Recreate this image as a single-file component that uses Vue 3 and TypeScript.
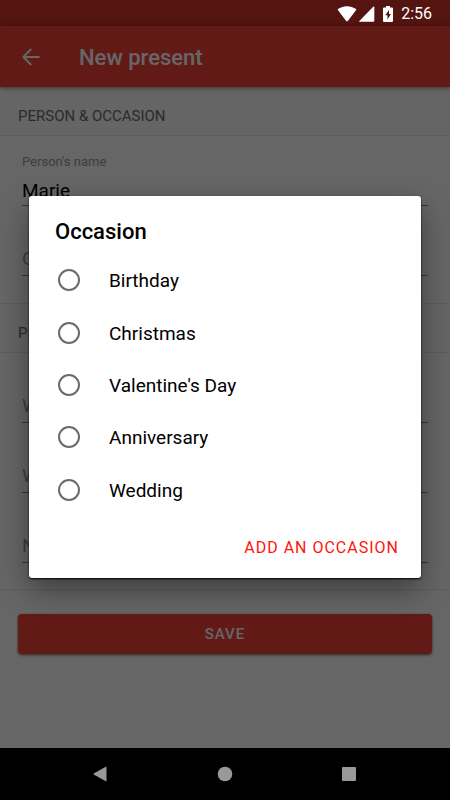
<script setup lang="ts">
import { ref } from 'vue'

interface Field {
  id: string
  label: string
}

const person = ref<string>('Marie')
const occasion = ref<string>('')
const occasions: string[] = ['Birthday', 'Christmas', "Valentine's Day", 'Anniversary', 'Wedding']
const details: Field[] = [
  { id: 'what', label: 'What' },
  { id: 'where', label: 'Where' },
  { id: 'notes', label: 'Notes' },
]
</script>

<template>
  <div class="screen">
    <div class="status">
      <svg class="wifi" width="20" height="16" viewBox="0 0 20 16" aria-hidden="true">
        <path d="M.5 3.600C3 1.500 6 .2 10 .2s7 1.300 9.500 3.400L11 14.800q-1 1.100-2 0z" />
      </svg>
      <svg class="signal" width="16" height="16" viewBox="0 0 16 16" aria-hidden="true">
        <path d="M15.300 1.200v13.600q0 1-1 1H.8q-1.200 0-.4-.9L14.200.8q1.100-.9 1.100.4z" />
      </svg>
      <svg class="battery" width="10" height="16" viewBox="0 0 10 16" aria-hidden="true">
        <path fill-rule="evenodd" d="M3 0h4v1.500h2q1 0 1 1V15q0 1-1 1H1q-1 0-1-1V2.500q0-1 1-1h2zM6 4 2.300 9.200h2.200V13.500L7.900 8H6z" />
      </svg>
      <span>2:56</span>
    </div>

    <div class="app">
      <header class="bar">
        <button class="back" type="button" aria-label="Back">
          <svg width="18" height="18" viewBox="0 0 18 18" aria-hidden="true">
            <path d="M17.500 9H1.500M9.200 1 1.300 9l7.900 8" />
          </svg>
        </button>
        <h1>New present</h1>
      </header>

      <main>
        <h2>PERSON &amp; OCCASION</h2>
        <div class="fields first">
          <div class="field filled">
            <label for="person">Person's name</label>
            <input id="person" v-model="person" type="text" />
          </div>
          <div class="field">
            <input id="occasion" type="text" placeholder="Occasion" aria-label="Occasion" readonly :value="occasion" />
          </div>
        </div>
        <h2 class="ruled">PRESENT</h2>
        <div class="fields second">
          <div v-for="f in details" :key="f.id" class="field">
            <input :id="f.id" type="text" :placeholder="f.label" :aria-label="f.label" />
          </div>
        </div>
        <div class="actions">
          <button class="save" type="button">SAVE</button>
        </div>
      </main>

      <div class="scrim">
        <section class="dialog" role="dialog" aria-labelledby="dialog-title">
          <h3 id="dialog-title">Occasion</h3>
          <div class="options" role="radiogroup" aria-labelledby="dialog-title">
            <label v-for="o in occasions" :key="o" class="option">
              <input v-model="occasion" type="radio" name="occasion" :value="o" />
              <span>{{ o }}</span>
            </label>
          </div>
          <div class="footer">
            <button class="add" type="button">ADD AN OCCASION</button>
          </div>
        </section>
      </div>
    </div>

    <nav class="nav">
      <button type="button" aria-label="Back">
        <svg width="16" height="16" viewBox="0 0 16 16"><path d="M14.500 1.200v13.600q0 .8-.7.4L1.700 8.400q-.7-.4 0-.8L13.800.8q.7-.4.7.4z" /></svg>
      </button>
      <button type="button" aria-label="Home">
        <svg width="16" height="16" viewBox="0 0 16 16"><circle cx="8" cy="8" r="7.300" /></svg>
      </button>
      <button type="button" aria-label="Overview">
        <svg width="16" height="16" viewBox="0 0 16 16"><rect x="0" y="1" width="14" height="14" rx="1" /></svg>
      </button>
    </nav>
  </div>
</template>

<style>
body {
  background: #000;
}
</style>

<style scoped>
.screen {
  display: flex;
  flex-direction: column;
  min-height: 100vh;
  font-family: Roboto, "Liberation Sans", sans-serif;
}
.screen * {
  box-sizing: border-box;
}
button,
input {
  font-family: inherit;
  border: 0;
  padding: 0;
  background: none;
}
h1,
h2,
h3 {
  margin: 0;
}
.status {
  display: flex;
  align-items: center;
  justify-content: flex-end;
  height: 26px;
  padding: 1px 18px 0 0;
  background: #541410;
  color: #fff;
  font-size: 16px;
}
.status svg {
  fill: #fff;
}
.signal {
  margin-left: 2px;
}
.battery {
  margin: 0 8px;
}
.app {
  position: relative;
  display: flex;
  flex: 1;
  flex-direction: column;
  background: #fff;
}
.bar {
  position: relative;
  display: flex;
  align-items: center;
  height: 61px;
  padding: 0 22px;
  background: #f4433a;
  box-shadow: 0 1px 4px rgba(0, 0, 0, 0.5);
  color: #fff;
}
.back {
  display: flex;
  width: 57px;
}
.back svg {
  fill: none;
  stroke: #fff;
  stroke-width: 2;
}
h1 {
  padding-top: 2px;
  font-size: 22px;
  font-weight: 500;
}
h2 {
  height: 49px;
  padding: 3px 18px 0;
  border-bottom: 1px solid #e6e6e6;
  background: #fcfcfc;
  color: #6c6c6c;
  font-size: 15px;
  font-weight: 400;
  line-height: 52px;
}
.ruled {
  height: 50px;
  border-top: 1px solid #e6e6e6;
}
.fields {
  padding: 0 22px;
}
.first {
  padding-bottom: 27px;
}
.second {
  padding-bottom: 26px;
}
.field {
  display: flex;
  flex-direction: column;
  justify-content: flex-end;
  height: 70px;
  border-bottom: 1px solid #8a8a8a;
}
.field label {
  color: #999;
  font-size: 13px;
  line-height: 16px;
}
.field input {
  width: 100%;
  height: 35px;
  padding-top: 2px;
  color: #000;
  font-size: 19px;
  outline: 0;
}
.field.filled input {
  padding-top: 6px;
}
.field input::placeholder {
  color: #999;
  opacity: 1;
}
.actions {
  padding: 24px 18px;
  border-top: 1px solid #e6e6e6;
}
.save {
  width: 100%;
  height: 40px;
  border-radius: 4px;
  background: #f4433a;
  box-shadow: 0 1px 3px rgba(0, 0, 0, 0.6);
  color: #fff;
  font-size: 15px;
  font-weight: 500;
  letter-spacing: 1px;
}
.scrim {
  position: absolute;
  inset: 0;
  display: flex;
  align-items: center;
  justify-content: center;
  padding: 0 29px;
  background: rgba(0, 0, 0, 0.6);
}
.dialog {
  width: 100%;
  padding: 18px 0 4px;
  border-radius: 3px;
  background: #fff;
  box-shadow: 0 1px 2px #000, 0 12px 30px rgba(0, 0, 0, 0.4);
}
h3 {
  height: 40px;
  padding: 0 26px;
  color: #000;
  font-size: 22px;
  font-weight: 500;
  line-height: 36px;
}
.options {
  display: grid;
  grid-template-rows: repeat(5, 1fr);
  height: 262px;
}
.option {
  display: flex;
  align-items: center;
  gap: 29px;
  padding: 0 29px;
  color: #000;
  font-size: 19px;
  line-height: 24px;
}
.option span {
  padding-top: 2px;
}
.option input {
  width: 22px;
  height: 22px;
  margin: 0;
  border: 2px solid #6b6b6b;
  border-radius: 50%;
  appearance: none;
}
.option input:checked {
  background: radial-gradient(circle, #f4433a 5px, transparent 6px);
}
.footer {
  display: flex;
  justify-content: flex-end;
  padding: 13px 16px 9px;
}
.add {
  height: 36px;
  padding: 0 6px;
  color: #ff1408;
  font-size: 16px;
  font-weight: 400;
  letter-spacing: 1px;
}
.nav {
  display: flex;
  align-items: center;
  justify-content: space-between;
  height: 52px;
  padding: 0 76px;
  background: #000;
}
.nav button {
  display: flex;
  align-items: center;
  justify-content: center;
  width: 48px;
  height: 48px;
}
.nav svg {
  fill: #999;
}
</style>
